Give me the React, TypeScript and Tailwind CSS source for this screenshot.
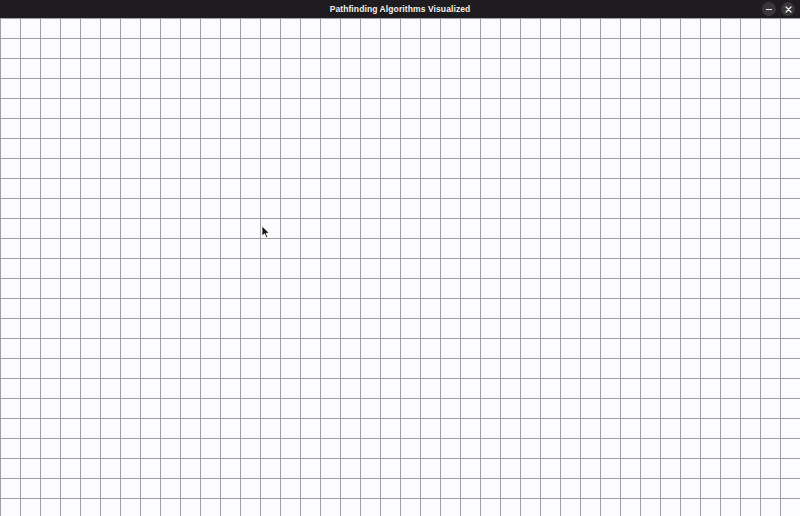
const COLS = 40;
const ROWS = 25;

function Cell() {
  return <div className="w-[20px] h-[20px] shrink-0 border-l border-t border-[#a09fa1]" />;
}

function Cursor() {
  return (
    <svg className="absolute left-[261px] top-[225px]" width="9" height="14" viewBox="0 0 9 14">
      <path d="M1 1 L1 11 L3.5 8.8 L5.3 12.8 L6.8 12.1 L5.1 8.3 L8.2 8.1 Z" fill="#111" stroke="#fff" strokeWidth="0.8" />
    </svg>
  );
}

export default function App() {
  const rows = Array.from({ length: ROWS });
  const cols = Array.from({ length: COLS });

  return (
    <div className="w-[800px] h-[516px] overflow-hidden flex flex-col bg-[#fcfbfd] relative">
      {/* barre de titre */}
      <div className="h-[18px] shrink-0 bg-[#1e1c1e] flex items-center relative z-10">
        <span
          className="flex-1 text-center text-[8.5px] font-bold text-[#f1f0f1] tracking-[0.1px]"
          style={{ fontFamily: '"Liberation Sans", "DejaVu Sans", sans-serif' }}
        >
          Pathfinding Algorithms Visualized
        </span>
        <div className="absolute right-[5px] top-[2px] flex gap-[5px]">
          <div className="w-[14px] h-[14px] rounded-full bg-[#383638] flex items-center justify-center">
            <div className="w-[6px] h-[1px] bg-[#e8e8e8]" />
          </div>
          <div className="w-[14px] h-[14px] rounded-full bg-[#383638] flex items-center justify-center">
            <svg width="7" height="7" viewBox="0 0 7 7">
              <path d="M1 1 L6 6 M6 1 L1 6" stroke="#ececec" strokeWidth="1.3" strokeLinecap="round" />
            </svg>
          </div>
        </div>
      </div>

      {/* grille */}
      <div className="flex-1 overflow-hidden flex flex-col">
        {rows.map((_, r) => (
          <div key={r} className="flex">
            {cols.map((_, c) => (
              <Cell key={c} />
            ))}
          </div>
        ))}
      </div>

      <Cursor />
    </div>
  );
}
